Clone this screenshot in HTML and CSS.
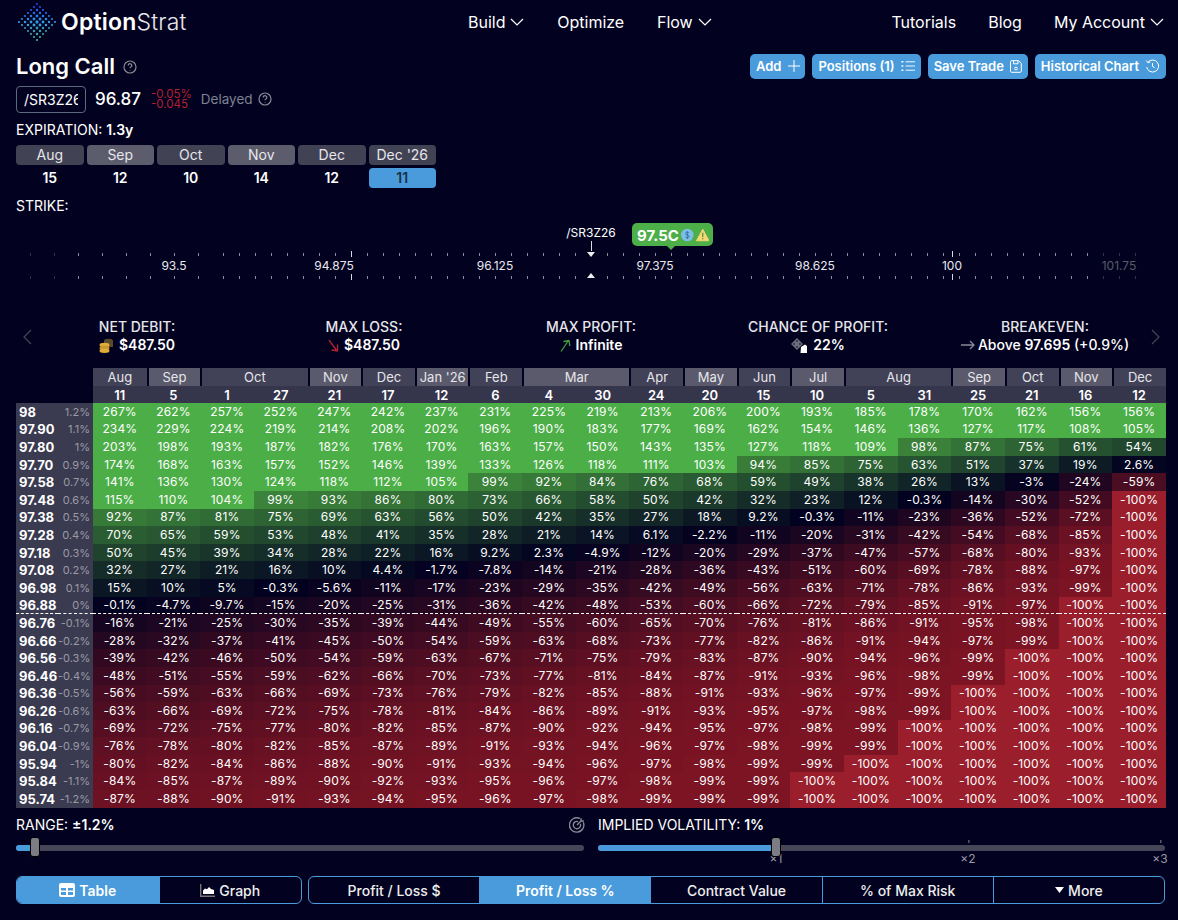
FILE: index.html
```html
<!DOCTYPE html>
<html lang="en">
<head>
<meta charset="utf-8">
<title>Long Call - OptionStrat</title>
<link rel="stylesheet" href="styles.css">
</head>
<body>
<nav class="nav">
  <a class="logo">
    <svg id="logoMark" class="logo-mark" width="40" height="40" viewBox="0 0 40 40"></svg>
    <span class="logo-text"><b>Option</b>Strat</span>
  </a>
  <div class="nav-group">
    <a class="nav-link">Build <svg class="chev" width="14" height="8" viewBox="0 0 14 8"><path d="M1 1l6 6 6-6"/></svg></a>
    <a class="nav-link">Optimize</a>
    <a class="nav-link">Flow <svg class="chev" width="14" height="8" viewBox="0 0 14 8"><path d="M1 1l6 6 6-6"/></svg></a>
  </div>
  <div class="nav-group nav-right">
    <a class="nav-link">Tutorials</a>
    <a class="nav-link">Blog</a>
    <a class="nav-link">My Account <svg class="chev" width="14" height="8" viewBox="0 0 14 8"><path d="M1 1l6 6 6-6"/></svg></a>
  </div>
</nav>

<header class="title-row">
  <h1 class="title">Long Call
    <svg class="help help-title" width="14" height="14" viewBox="0 0 14 14"><circle cx="7" cy="7" r="6"/><path d="M5.2 5.4a1.8 1.8 0 1 1 2.7 1.6c-.6.3-.9.6-.9 1.3"/><path d="M7 10v.6"/></svg>
  </h1>
  <div class="actions">
    <button class="btn btn-add">Add <svg width="14" height="14" viewBox="0 0 14 14"><path d="M7 1v12M1 7h12"/></svg></button>
    <button class="btn">Positions (1) <svg width="14" height="12" viewBox="0 0 15 12"><path d="M5 1.5h10M5 6h10M5 10.5h10"/><path class="dot" d="M.5 1.5h2M.5 6h2M.5 10.5h2"/></svg></button>
    <button class="btn">Save Trade <svg width="12" height="13" viewBox="0 0 12 13"><path d="M1.5.7h7l2.8 2.600v8a1 1 0 0 1-1 1h-8.800a1 1 0 0 1-1-1v-9.600a1 1 0 0 1 1-1z"/><path d="M3.500.8v3h4.500v-3"/><circle cx="6" cy="8.500" r="1.400"/></svg></button>
    <button class="btn">Historical Chart <svg width="15" height="14" viewBox="0 0 14 14"><path d="M2.500 3.200A6 6 0 1 1 1.200 8"/><path d="M.8 1.500l1.500 2.200 2.400-.7"/><path d="M7 4v3.400l2.200 1.300"/></svg></button>
  </div>
</header>

<section class="ticker">
  <div class="symbol"><span>/SR3Z26</span></div>
  <span class="price">96.87</span>
  <span class="change"><span>-0.05%</span><span>-0.045</span></span>
  <span class="delayed">Delayed
    <svg class="help" width="14" height="14" viewBox="0 0 14 14"><circle cx="7" cy="7" r="6"/><path d="M5.2 5.400a1.800 1.800 0 1 1 2.700 1.600c-.6.3-.9.6-.9 1.300"/><path d="M7 10v.6"/></svg>
  </span>
</section>

<div class="label exp-label">EXPIRATION: <b>1.3y</b></div>
<div class="exp-grid">
  <div class="exp-tab">Aug</div>
  <div class="exp-tab alt">Sep</div>
  <div class="exp-tab">Oct</div>
  <div class="exp-tab alt">Nov</div>
  <div class="exp-tab">Dec</div>
  <div class="exp-tab">Dec '26</div>
  <div class="exp-day">15</div>
  <div class="exp-day">12</div>
  <div class="exp-day">10</div>
  <div class="exp-day">14</div>
  <div class="exp-day">12</div>
  <div class="exp-day active">11</div>
</div>

<div class="label strike-label">STRIKE:</div>
<section class="strip" id="strip">
  <span class="under-label">/SR3Z26</span>
  <span class="under-line"></span>
  <span class="tri tri-down"></span>
  <span class="tri tri-up"></span>
  <div class="badge">
    <span>97.5C</span>
    <svg width="14" height="14" viewBox="0 0 14 14"><circle cx="7" cy="7" r="7" fill="#7fbde9"/><path d="M9 4.800c-.4-.7-1.100-1-2-1-1.100 0-2 .5-2 1.500 0 2.100 4.100 1.100 4.100 3.300 0 1-.9 1.600-2.100 1.600-1 0-1.800-.4-2.200-1.200M7 2.800v8.400" fill="none" stroke="#2b6f9c" stroke-width="1"/></svg>
    <svg width="15" height="14" viewBox="0 0 15 14"><path d="M7.500.6l7 12.800h-14z" fill="#f6d776" stroke="#f6d776" stroke-linejoin="round"/><path d="M7.500 4.500v4.600M7.500 10.400v1.200" stroke="#5b8f3a" stroke-width="1.400"/></svg>
  </div>
</section>

<section class="stats">
  <svg class="pager pager-l" width="9" height="16" viewBox="0 0 9 16"><path d="M8 1L1 8l7 7"/></svg>
  <div class="stat"><div class="stat-label">NET DEBIT:</div><div class="stat-value">
    <svg width="15" height="15" viewBox="0 0 15 15"><ellipse cx="9.500" cy="3" rx="4.500" ry="2.200" fill="#5a4a2c"/><rect x="5" y="3" width="9" height="6" fill="#5a4a2c"/><ellipse cx="5.500" cy="7" rx="5" ry="2.200" fill="#e0ad3b"/><ellipse cx="5.500" cy="10" rx="5" ry="2.200" fill="#c9952f"/><ellipse cx="5.500" cy="12.800" rx="5" ry="2.200" fill="#e0ad3b"/></svg>
    <span>$487.50</span></div></div>
  <div class="stat"><div class="stat-label">MAX LOSS:</div><div class="stat-value">
    <svg class="arrow" width="11" height="13" viewBox="0 0 11 13"><path d="M1 1l8 11M9.500 5.500v6.500l-6-1" stroke="#b32231"/></svg>
    <span>$487.50</span></div></div>
  <div class="stat"><div class="stat-label">MAX PROFIT:</div><div class="stat-value">
    <svg class="arrow" width="11" height="13" viewBox="0 0 11 13"><path d="M1 12.500L8.500 1.500M3.500 2.500l5.500-1 .8 5.500" stroke="#3fa33f"/></svg>
    <span>Infinite</span></div></div>
  <div class="stat"><div class="stat-label">CHANCE OF PROFIT:</div><div class="stat-value">
    <svg width="17" height="15" viewBox="0 0 17 15"><path d="M6 0l6 6-6 6-6-6z" fill="#6d6d7d"/><circle cx="6" cy="3" r=".9" fill="#2a2a3a"/><circle cx="6" cy="9" r=".9" fill="#2a2a3a"/><circle cx="3" cy="6" r=".9" fill="#2a2a3a"/><circle cx="9" cy="6" r=".9" fill="#2a2a3a"/><path d="M10 9l4-2.500 2 1.500v7h-6.500z" fill="#fff"/></svg>
    <span>22%</span></div></div>
  <div class="stat"><div class="stat-label">BREAKEVEN:</div><div class="stat-value plain">
    <svg class="arrow" width="14" height="10" viewBox="0 0 14 10"><path d="M0 5h13M9 1l4 4-4 4" stroke="#8a8a96"/></svg>
    <span>Above <b>97.695</b> (+0.9%)</span></div></div>
  <svg class="pager pager-r" width="9" height="16" viewBox="0 0 9 16"><path d="M1 1l7 7-7 7"/></svg>
</section>

<table class="pl">
  <colgroup id="cols"></colgroup>
  <thead id="thead"></thead>
  <tbody id="tbody"></tbody>
</table>

<section class="controls">
  <div class="control">
    <div class="label ctl-label">RANGE: <b>±1.2%</b></div>
    <div class="track"><div class="fill fill-range"></div><div class="thumb thumb-range"></div></div>
  </div>
  <svg class="target" width="16" height="16" viewBox="0 0 14 14"><path d="M12.500 4.500A6.300 6.300 0 1 1 9.500 1.300"/><path d="M10 6a3.200 3.200 0 1 1-2-2"/><path d="M7 7l4-4M10.500 1v2.500H13"/></svg>
  <div class="control">
    <div class="label ctl-label">IMPLIED VOLATILITY: <b>1%</b></div>
    <div class="track">
      <div class="fill fill-iv"></div>
      <span class="mark mark-1">×1</span>
      <span class="mark mark-2">×2</span>
      <span class="mark mark-3">×3</span>
      <div class="thumb thumb-iv"></div>
    </div>
  </div>
</section>

<section class="toolbar">
  <div class="seg seg-view">
    <button class="seg-btn on"><svg class="seg-icon" width="16" height="14" viewBox="0 0 16 14"><rect width="16" height="14" rx="2" fill="#fff"/><path d="M2 5h5v2.500H2zM9 5h5v2.500H9zM2 9h5v3H2zM9 9h5v3H9z" fill="#4a9bdb"/></svg>Table</button>
    <button class="seg-btn"><svg class="seg-icon" width="15" height="13" viewBox="0 0 15 13"><path d="M.7 0v12.300H15" fill="none" stroke="#777" stroke-width="1.400"/><path d="M3 10V6.500l2-2 2 .7 2-2.200 2 2 3 1V10z" fill="#fff"/></svg>Graph</button>
  </div>
  <div class="seg seg-mode">
    <button class="seg-btn">Profit / Loss $</button>
    <button class="seg-btn on">Profit / Loss %</button>
    <button class="seg-btn">Contract Value</button>
    <button class="seg-btn">% of Max Risk</button>
    <button class="seg-btn"><svg class="seg-icon caret" width="9" height="6" viewBox="0 0 9 6"><path d="M0 0h9L4.500 6z" fill="#fff"/></svg>More</button>
  </div>
</section>
<script src="app.js"></script>
</body>
</html>
```
FILE: styles.css
```css
* { box-sizing: border-box; }
html, body { margin: 0; padding: 0; }
body {
  background: #020220;
  color: #fff;
  font-family: Inter, "Liberation Sans", sans-serif;
  font-size: 13px;
  width: 1178px;
  height: 920px;
  overflow: hidden;
}
a { color: inherit; text-decoration: none; }
b { font-weight: 600; }

/* nav */
.nav { display: flex; align-items: center; height: 44px; padding: 0 14px 0 18px; }
.logo { display: flex; align-items: center; gap: 3px; width: 450px; }
.logo-text { font-size: 23px; font-weight: 300; letter-spacing: .2px; line-height: 28px; color: #e8e8ee; }
.logo-text b { font-weight: 600; color: #fff; }
.nav-group { display: flex; align-items: center; gap: 32.75px; }
.nav-right { margin-left: auto; gap: 32px; }
.nav-link { display: flex; align-items: center; gap: 5px; font-size: 16px; line-height: 20px; white-space: nowrap; }
.chev { fill: none; stroke: #fff; stroke-width: 1.2; }

/* title */
.title-row { display: flex; justify-content: space-between; align-items: center; height: 25px; margin-top: 10px; padding: 0 12px 0 16px; }
.title { display: flex; align-items: center; gap: 8px; margin: 0; font-size: 22px; font-weight: 600; line-height: 25px; }
.help { fill: none; stroke: #8a8a96; stroke-width: 1.2; }
.actions { display: flex; gap: 7px; }
.btn { display: flex; align-items: center; gap: 6px; height: 25px; padding: 0 6px 1px; border: 0; border-radius: 5px; background: #4a9bdb; color: #fff; font: 600 13px Inter, "Liberation Sans", sans-serif; white-space: nowrap; }
.btn-add { padding-right: 4px; }
.btn svg { flex: none; fill: none; stroke: #fff; stroke-width: 1; }
.btn svg .dot { stroke-width: 1.6; }

/* ticker */
.ticker { display: flex; align-items: center; height: 27px; margin: 7px 0 0 16px; }
.symbol { width: 70px; height: 27px; padding: 0 7px; border: 1px solid #5d6a7c; border-radius: 4px; overflow: hidden; font-size: 14px; line-height: 25px; }
.symbol span { display: block; width: 54px; overflow: hidden; white-space: nowrap; }
.price { margin: -1px 0 0 9px; font-size: 17px; font-weight: 500; }
.change { display: flex; flex-direction: column; margin: -1px 0 0 10px; color: #b3202f; font-size: 11.5px; line-height: 10px; }
.delayed { display: flex; align-items: center; gap: 5px; margin: -1px 0 0 9px; color: #7d8292; font-size: 13.5px; }

/* labels and expiration */
.label { margin-left: 16px; font-size: 14px; line-height: 16px; white-space: nowrap; }
.exp-label { margin-top: 9px; }
.exp-grid { display: grid; grid-template-columns: repeat(6, 1fr); grid-template-rows: 20px 20px; gap: 3px; width: 420px; margin: 7px 0 0 16px; }
.exp-tab { border-radius: 4px; background: #424255; color: #e6e6ea; font-size: 14px; line-height: 20px; text-align: center; white-space: nowrap; }
.exp-tab.alt { background: #5c5c6d; }
.exp-day { border-radius: 4px; font-size: 14px; font-weight: 600; line-height: 20px; text-align: center; }
.exp-day.active { background: #4a9bdb; color: #17324a; }
.strike-label { margin-top: 10px; }

/* strike strip */
.strip { position: relative; height: 90px; }
.tick { position: absolute; width: 1px; height: 3px; background: #8d8d98; }
.tick-t { top: 39px; }
.tick-b { top: 62px; }
.tick.tall { height: 6px; background: #d8d8dd; }
.tick-t.tall { top: 37px; }
.tick-b.tall { top: 60px; }
.tick.dim { opacity: .35; }
.strike-num { position: absolute; top: 44px; transform: translateX(-50%); font-size: 12px; line-height: 15px; color: #e8e8ee; }
.strike-num.dim { color: #5a5a68; }
.under-label { position: absolute; top: 11px; left: 591px; transform: translateX(-50%); font-size: 12px; line-height: 15px; }
.under-line { position: absolute; top: 27px; left: 591px; width: 1px; height: 10px; background: #ddd; }
.tri { position: absolute; left: 587px; width: 0; height: 0; border-left: 4px solid transparent; border-right: 4px solid transparent; }
.tri-down { top: 38px; border-top: 5px solid #eee; }
.tri-up { top: 59px; border-bottom: 5px solid #eee; }
.badge { position: absolute; top: 9px; left: 632px; display: flex; align-items: center; gap: 2px; width: 81px; height: 23px; padding: 1px 4px 0 5px; border-radius: 5px; background: #4caf47; font-size: 15px; font-weight: 700; }
.badge::after { content: ""; position: absolute; left: 35px; top: 23px; border-left: 4px solid transparent; border-right: 4px solid transparent; border-top: 4px solid #4caf47; }

/* stats */
.stats { position: relative; display: grid; grid-template-columns: repeat(5, 227px); height: 37px; margin: 14px 0 0 23.5px; }
.stat { text-align: center; font-size: 14px; line-height: 18px; }
.stat-label { color: #e6e6ea; font-weight: 500; white-space: nowrap; }
.stat-value { display: flex; justify-content: center; align-items: center; gap: 5px; font-weight: 600; white-space: nowrap; }
.stat-value.plain { font-weight: 500; gap: 3px; }
.arrow { fill: none; stroke-width: 1.300; }
.pager { position: absolute; top: 11px; fill: none; stroke: #444456; stroke-width: 1.200; }
.pager-l { left: -1px; }
.pager-r { left: 1127px; }

/* table */
.pl { table-layout: fixed; width: 1150px; margin: 13px 0 0 16px; border-collapse: separate; border-spacing: 0; }
.pl col.c-strike { width: 42px; }
.pl col.c-pct { width: 35px; }
.pl th, .pl td { padding: 0; overflow: visible; white-space: nowrap; text-align: center; }
.mon { height: 18px; border-left: 2px solid #020220; background: #414157; background-clip: padding-box; color: #e6e6ea; font-size: 13px; font-weight: 400; }
.mon.alt { background: #5a5a6c; background-clip: padding-box; }
.mon.first { border-left: 0; }
.day { height: 17px; background: #35354c; font-size: 13px; font-weight: 600; }
.empty { background: transparent; }
.pl tbody tr { height: 17.6px; }
.pl td { height: 17.6px; font-size: 12px; line-height: 16px; letter-spacing: .15px; }
.pl .strike { padding-left: 3px; background: #3a3a50; font-size: 13px; font-weight: 700; text-align: left; letter-spacing: 0; }
.pl .pct { padding-right: 3px; background: #3a3a50; color: #9a9aa6; font-size: 11px; text-align: right; letter-spacing: 0; }
.pl tr.zero td { border-bottom: 1px dashed #fff; }

/* controls */
.controls { display: grid; grid-template-columns: 568px 14px 567px; margin: 9px 0 0 16px; }
.control { min-width: 0; }
.ctl-label { margin-left: 0; }
.target { margin-left: -15px; fill: none; stroke: #8a8a96; stroke-width: 1.200; }
.track { position: relative; height: 6px; margin-top: 12px; border-radius: 3px; background: #464658; }
.fill { position: absolute; left: 0; top: 0; bottom: 0; border-radius: 3px 0 0 3px; background: #4a9bdb; }
.fill-range { width: 14px; }
.fill-iv { width: 174px; }
.thumb { position: absolute; top: -8px; width: 10px; height: 20px; border-radius: 3px; background: #7c7c84; border: 1px solid #000; }
.thumb-range { left: 14px; }
.thumb-iv { left: 173px; }
.mark { position: absolute; top: 8px; transform: translateX(-50%); color: #9a9aa6; font-size: 12px; line-height: 12px; }
.mark::before { content: ""; position: absolute; left: 50%; top: -13px; width: 1px; height: 3px; background: #888; }
.mark-1 { left: 178px; }
.mark-1::before { display: none; }
.mark-2 { left: 370px; }
.mark-3 { left: 562px; }

/* toolbar */
.toolbar { display: flex; gap: 6px; margin: 25px 0 0 16px; }
.seg { display: flex; height: 28px; border: 1px solid #4a9bdb; border-radius: 6px; overflow: hidden; }
.seg-view { width: 286px; }
.seg-mode { width: 857px; }
.seg-btn { flex: 1 1 0; display: flex; justify-content: center; align-items: center; gap: 4px; min-width: 0; padding: 1px 0 0; border: 0; border-left: 1px solid #4a9bdb; background: transparent; color: #eee; font: 500 14px Inter, "Liberation Sans", sans-serif; }
.seg-btn:first-child { border-left: 0; }
.seg-btn.on { background: #4a9bdb; color: #fff; font-weight: 600; }
```
FILE: app.js
```js
// Logo: diamond lattice of dots
(function () {
  var svg = document.getElementById('logoMark'), out = '';
  var stops = [[26, 70, 240], [50, 150, 225], [80, 225, 165]];
  function mix(a, b, t) { return a.map(function (v, i) { return Math.round(v + (b[i] - v) * t); }); }
  for (var j = -6; j <= 6; j++) {
    for (var i = -6; i <= 6; i++) {
      if ((i + j) % 2 !== 0 || Math.abs(i) + Math.abs(j) > 6) continue;
      var t = (j + 6) / 12;
      var c = t < .5 ? mix(stops[0], stops[1], t * 2) : mix(stops[1], stops[2], (t - .5) * 2);
      var d = Math.abs(i) + Math.abs(j);
      var r = 1.65 - d * 0.1;
      var a = j > 1 ? 0.85 : 1;
      out += '<circle cx="' + (19 + i * 3) + '" cy="' + (20 + j * 3) + '" r="' + r.toFixed(2) + '" fill="rgb(' + c.join(',') + ')" opacity="' + a + '"/>';
    }
  }
  svg.innerHTML = out;
})();

// Strike ruler
(function () {
  var strip = document.getElementById('strip');
  function add(cls, left, text) {
    var el = document.createElement('span');
    el.className = cls;
    el.style.left = left + 'px';
    if (text) el.textContent = text;
    strip.appendChild(el);
  }
  var xs = [30, 54, 78, 102, 126, 150, 174, 198], x;
  for (x = 223; x <= 1137; x += 16) if (x !== 591) xs.push(x);
  xs.forEach(function (p) {
    var tall = p === 351;
    var dim = p < 60 || p > 1100;
    var cls = (tall ? ' tall' : '') + (dim ? ' dim' : '');
    add('tick tick-t' + cls, p);
    add('tick tick-b' + cls, p);
  });
  add('tick tick-t tall', 952);
  add('tick tick-b tall', 952);
  [['93.5', 174], ['94.875', 334], ['96.125', 495], ['97.375', 655], ['98.625', 815], ['100', 952]].forEach(function (l) {
    add('strike-num', l[1], l[0]);
  });
  add('strike-num dim', 1119, '101.75');
})();

// Profit / loss table
(function () {
  var months = [['Aug', 1], ['Sep', 1], ['Oct', 2], ['Nov', 1], ['Dec', 1], ["Jan '26", 1], ['Feb', 1], ['Mar', 2], ['Apr', 1], ['May', 1], ['Jun', 1], ['Jul', 1], ['Aug', 2], ['Sep', 1], ['Oct', 1], ['Nov', 1], ['Dec', 1]];
  var days = [11, 5, 1, 27, 21, 17, 12, 6, 4, 30, 24, 20, 15, 10, 5, 31, 25, 21, 16, 12];
  var altMonths = { Sep: 1, Nov: 1, "Jan '26": 1, Mar: 1, May: 1, Jul: 1 };
  var x = -100;
  var rows = [
    ['98', '1.2%', [267,262,257,252,247,242,237,231,225,219,213,206,200,193,185,178,170,162,156,156]],
    ['97.90', '1.1%', [234,229,224,219,214,208,202,196,190,183,177,169,162,154,146,136,127,117,108,105]],
    ['97.80', '1%', [203,198,193,187,182,176,170,163,157,150,143,135,127,118,109,98,87,75,61,54]],
    ['97.70', '0.9%', [174,168,163,157,152,146,139,133,126,118,111,103,94,85,75,63,51,37,19,2.6]],
    ['97.58', '0.7%', [141,136,130,124,118,112,105,99,92,84,76,68,59,49,38,26,13,-3,-24,-59]],
    ['97.48', '0.6%', [115,110,104,99,93,86,80,73,66,58,50,42,32,23,12,-0.3,-14,-30,-52,x]],
    ['97.38', '0.5%', [92,87,81,75,69,63,56,50,42,35,27,18,9.2,-0.3,-11,-23,-36,-52,-72,x]],
    ['97.28', '0.4%', [70,65,59,53,48,41,35,28,21,14,6.1,-2.2,-11,-20,-31,-42,-54,-68,-85,x]],
    ['97.18', '0.3%', [50,45,39,34,28,22,16,9.2,2.3,-4.9,-12,-20,-29,-37,-47,-57,-68,-80,-93,x]],
    ['97.08', '0.2%', [32,27,21,16,10,4.4,-1.7,-7.8,-14,-21,-28,-36,-43,-51,-60,-69,-78,-88,-97,x]],
    ['96.98', '0.1%', [15,10,5,-0.3,-5.6,-11,-17,-23,-29,-35,-42,-49,-56,-63,-71,-78,-86,-93,-99,x]],
    ['96.88', '0%', [-0.1,-4.7,-9.7,-15,-20,-25,-31,-36,-42,-48,-53,-60,-66,-72,-79,-85,-91,-97,x,x]],
    ['96.76', '-0.1%', [-16,-21,-25,-30,-35,-39,-44,-49,-55,-60,-65,-70,-76,-81,-86,-91,-95,-98,x,x]],
    ['96.66', '-0.2%', [-28,-32,-37,-41,-45,-50,-54,-59,-63,-68,-73,-77,-82,-86,-91,-94,-97,-99,x,x]],
    ['96.56', '-0.3%', [-39,-42,-46,-50,-54,-59,-63,-67,-71,-75,-79,-83,-87,-90,-94,-96,-99,x,x,x]],
    ['96.46', '-0.4%', [-48,-51,-55,-59,-62,-66,-70,-73,-77,-81,-84,-87,-91,-93,-96,-98,-99,x,x,x]],
    ['96.36', '-0.5%', [-56,-59,-63,-66,-69,-73,-76,-79,-82,-85,-88,-91,-93,-96,-97,-99,x,x,x,x]],
    ['96.26', '-0.6%', [-63,-66,-69,-72,-75,-78,-81,-84,-86,-89,-91,-93,-95,-97,-98,-99,x,x,x,x]],
    ['96.16', '-0.7%', [-69,-72,-75,-77,-80,-82,-85,-87,-90,-92,-94,-95,-97,-98,-99,x,x,x,x,x]],
    ['96.04', '-0.9%', [-76,-78,-80,-82,-85,-87,-89,-91,-93,-94,-96,-97,-98,-99,-99,x,x,x,x,x]],
    ['95.94', '-1%', [-80,-82,-84,-86,-88,-90,-91,-93,-94,-96,-97,-98,-99,-99,x,x,x,x,x,x]],
    ['95.84', '-1.1%', [-84,-85,-87,-89,-90,-92,-93,-95,-96,-97,-98,-99,-99,x,x,x,x,x,x,x]],
    ['95.74', '-1.2%', [-87,-88,-90,-91,-93,-94,-95,-96,-97,-98,-99,-99,-99,x,x,x,x,x,x,x]]
  ];
  var BG = [2, 2, 32], GREEN = [60, 132, 58], RED = [125, 20, 35];
  function colour(v) {
    if (v >= 100) return 'rgb(76,174,71)';
    if (v <= -100) return 'rgb(154,30,43)';
    var end = v >= 0 ? GREEN : RED, t = Math.abs(v) / 100;
    return 'rgb(' + BG.map(function (b, i) { return Math.round(b + (end[i] - b) * t); }).join(',') + ')';
  }
  var cols = '<col class="c-strike"><col class="c-pct">' + days.map(function () { return '<col>'; }).join('');
  document.getElementById('cols').innerHTML = cols;
  var h = '<tr><th class="empty" colspan="2"></th>' + months.map(function (m, i) {
    var cls = 'mon' + (altMonths[m[0]] ? ' alt' : '') + (i === 0 ? ' first' : '');
    return '<th class="' + cls + '" colspan="' + m[1] + '">' + m[0] + '</th>';
  }).join('') + '</tr>';
  h += '<tr><th class="empty" colspan="2"></th>' + days.map(function (d) { return '<th class="day">' + d + '</th>'; }).join('') + '</tr>';
  document.getElementById('thead').innerHTML = h;
  document.getElementById('tbody').innerHTML = rows.map(function (r) {
    var cells = r[2].map(function (v) {
      return '<td style="background:' + colour(v) + '">' + v + '%</td>';
    }).join('');
    return '<tr' + (r[0] === '96.88' ? ' class="zero"' : '') + '><td class="strike">' + r[0] + '</td><td class="pct">' + r[1] + '</td>' + cells + '</tr>';
  }).join('');
})();
```
